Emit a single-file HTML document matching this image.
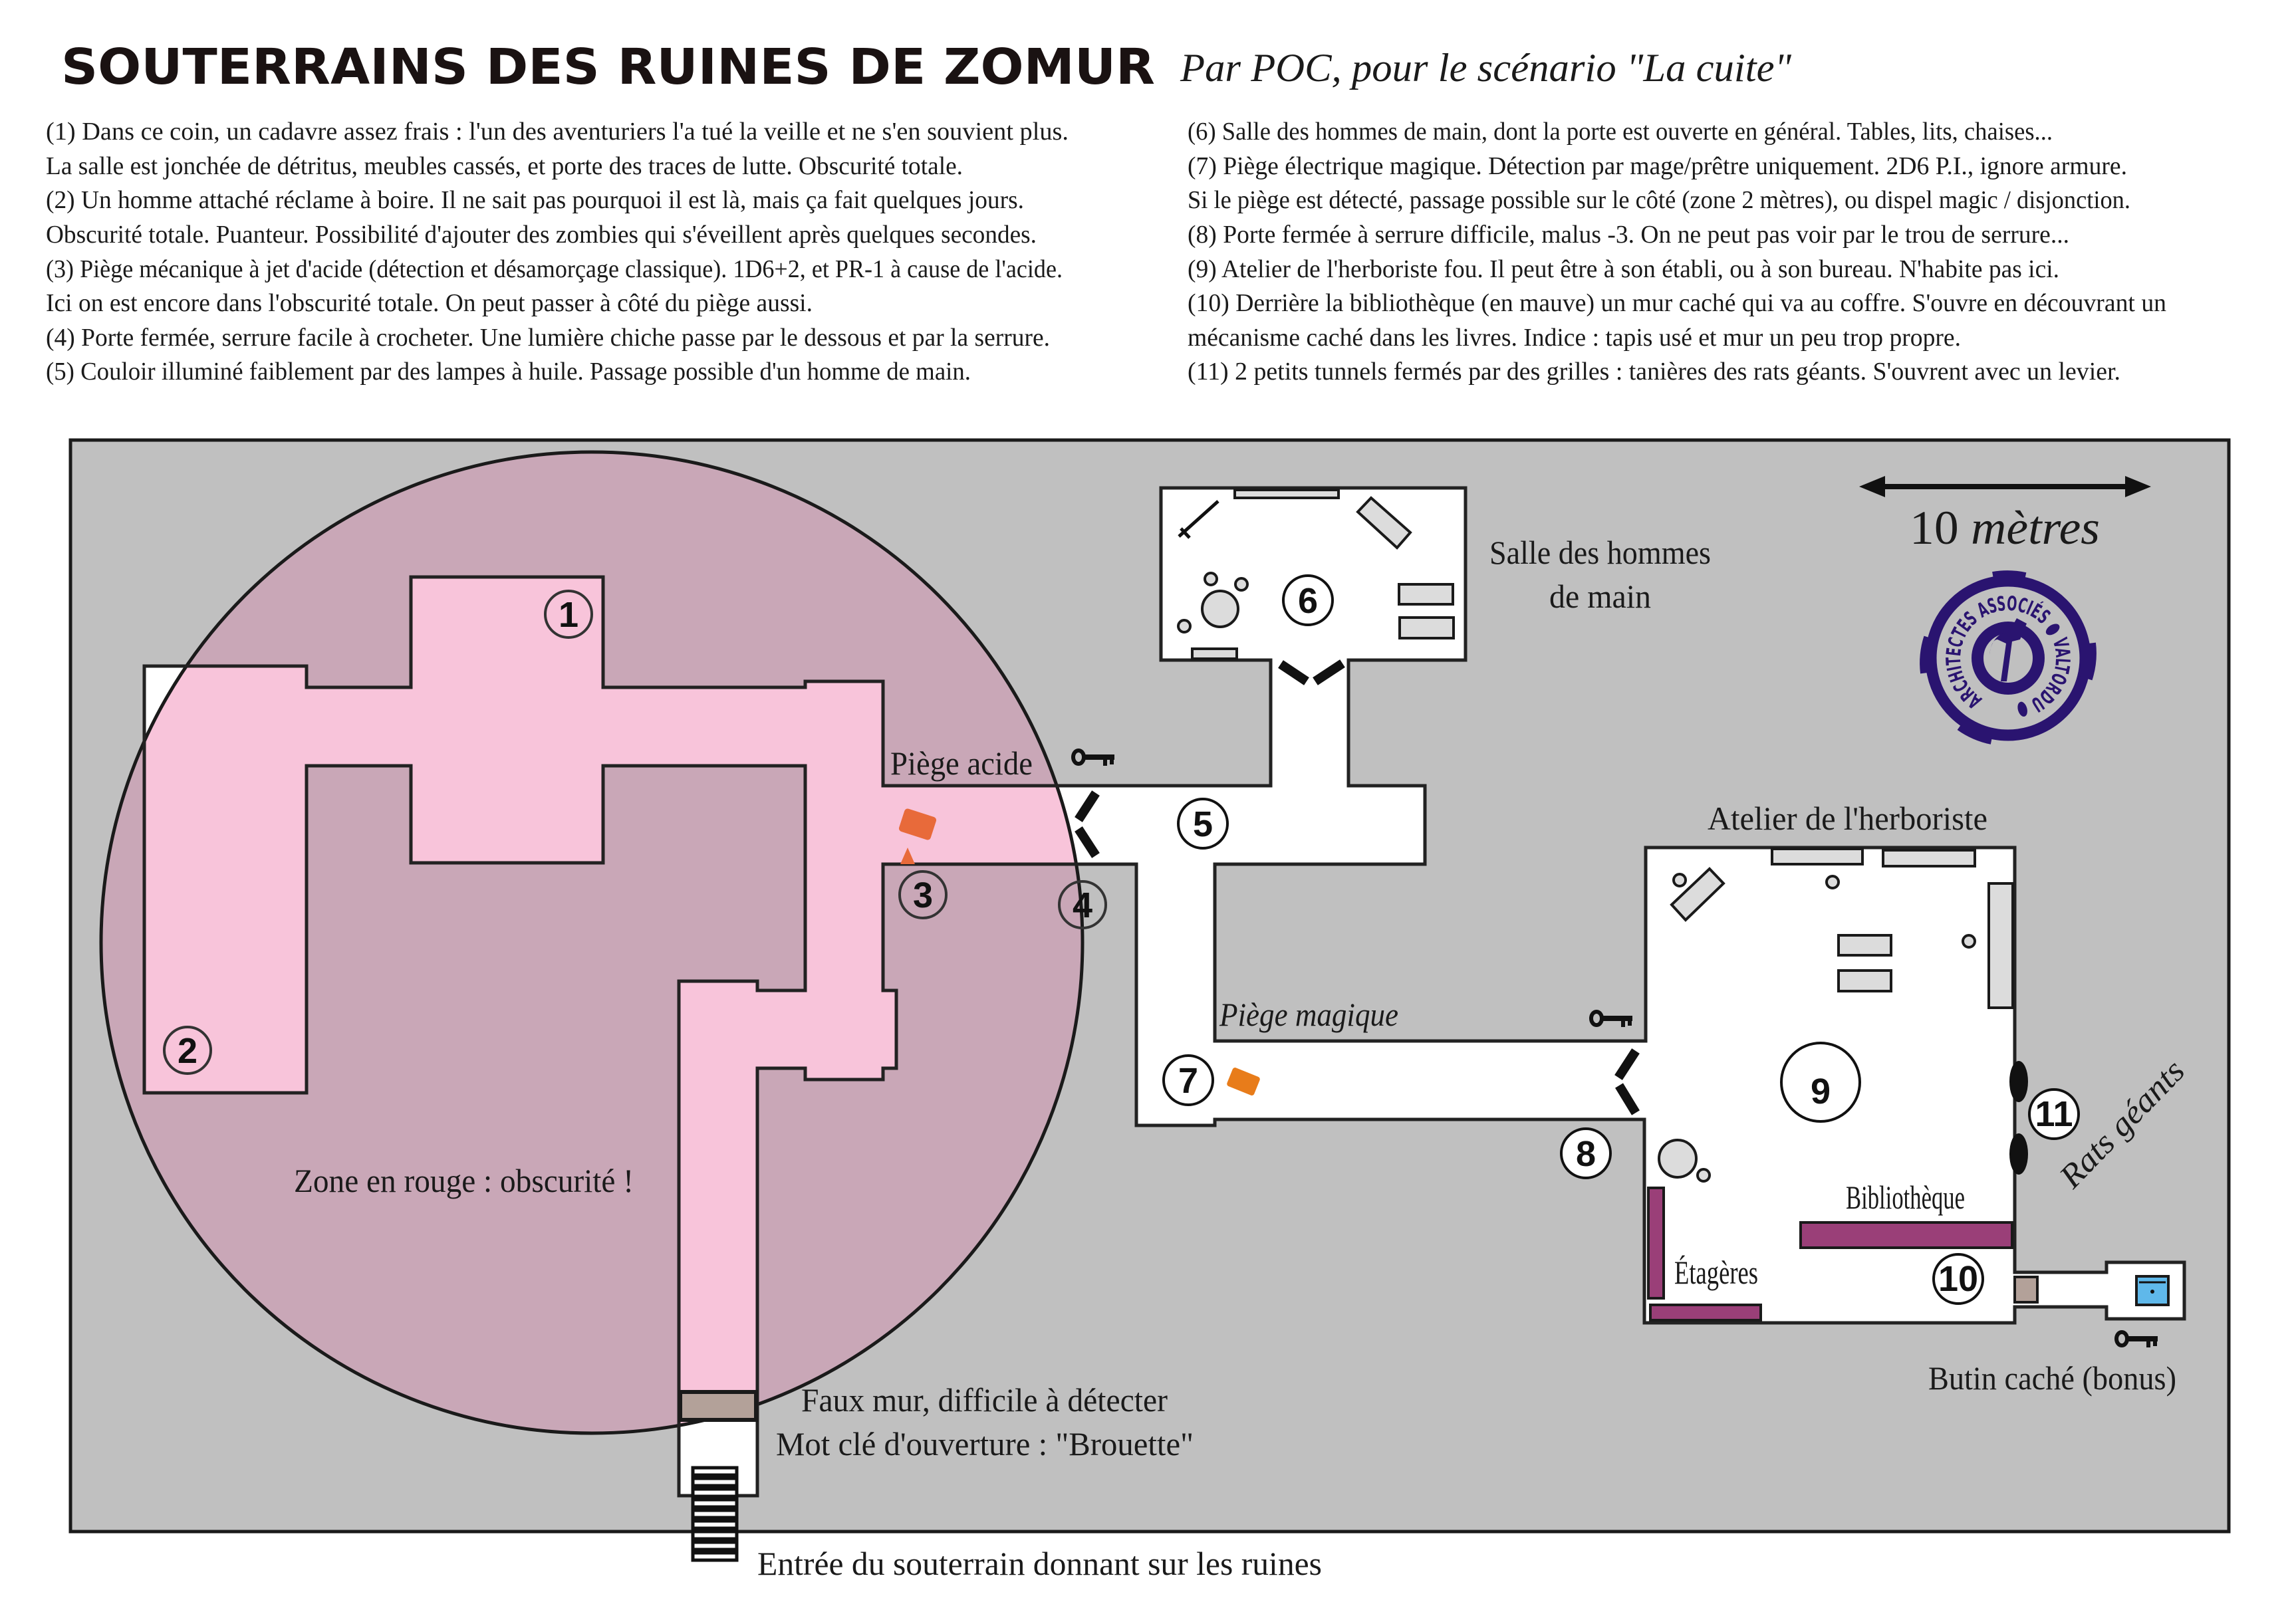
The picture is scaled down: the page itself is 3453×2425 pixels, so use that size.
<!DOCTYPE html>
<html><head><meta charset="utf-8"><style>
html,body{margin:0;padding:0;background:#fff}
svg{display:block}
.t{font-family:"Liberation Serif",serif;font-size:38px;fill:#1a1a1a}
.l{font-family:"Liberation Serif",serif;font-size:50px;fill:#1a1a1a}
.n{font-family:"Liberation Sans",sans-serif;font-weight:bold;font-size:54px;fill:#111;text-anchor:middle}
</style></head><body>
<svg width="3453" height="2425" viewBox="0 0 3453 2425" xmlns="http://www.w3.org/2000/svg">
<defs>
<ellipse id="zone" cx="890" cy="1418" rx="738" ry="738"/>
<clipPath id="zc"><use href="#zone"/></clipPath>
<path id="dun" d="M217,1002 L461,1002 L461,1034 L618,1034 L618,868 L907,868 L907,1034 L1211,1034 L1211,1025 L1328,1025 L1328,1182 L1911,1182 L1911,993 L1746,993 L1746,734 L2204,734 L2204,993 L2028,993 L2028,1182 L2143,1182 L2143,1300 L1827,1300 L1827,1566 L2475,1566 L2475,1275 L3030,1275 L3030,1914 L3168,1914 L3168,1899 L3285,1899 L3285,1984 L3168,1984 L3168,1966 L3030,1966 L3030,1990 L2473,1990 L2473,1684 L1827,1684 L1827,1693 L1709,1693 L1709,1300 L1328,1300 L1328,1490 L1348,1490 L1348,1607 L1328,1607 L1328,1624 L1211,1624 L1211,1607 L1139,1607 L1139,2250 L1021,2250 L1021,1476 L1139,1476 L1139,1490 L1211,1490 L1211,1152 L907,1152 L907,1298 L618,1298 L618,1152 L461,1152 L461,1644 L217,1644 Z"/>
<g id="key"><ellipse cx="11" cy="14" rx="8" ry="10" fill="none" stroke="#111" stroke-width="6"/><rect x="19" y="10" width="46" height="8" fill="#111"/><rect x="48" y="17" width="6" height="10" fill="#111"/><rect x="58" y="17" width="6" height="8" fill="#111"/></g>
<path id="ringtxt" d="M3020,1062 A72,72 0 1,1 3020.1,1062"/>
</defs>

<text x="92" y="126" font-family="DejaVu Sans, sans-serif" font-weight="bold" font-size="74" fill="#1a1212" textLength="1645" lengthAdjust="spacingAndGlyphs">SOUTERRAINS DES RUINES DE ZOMUR</text>
<text x="1775" y="122" font-family="Liberation Serif, serif" font-style="italic" font-size="60" fill="#1a1a1a" textLength="919" lengthAdjust="spacingAndGlyphs">Par POC, pour le scénario "La cuite"</text>

<text class="t" x="69" y="210" textLength="1538" lengthAdjust="spacingAndGlyphs">(1) Dans ce coin, un cadavre assez frais : l'un des aventuriers l'a tué la veille et ne s'en souvient plus.</text>
<text class="t" x="69" y="262" textLength="1379" lengthAdjust="spacingAndGlyphs">La salle est jonchée de détritus, meubles cassés, et porte des traces de lutte. Obscurité totale.</text>
<text class="t" x="69" y="313" textLength="1471" lengthAdjust="spacingAndGlyphs">(2) Un homme attaché réclame à boire. Il ne sait pas pourquoi il est là, mais ça fait quelques jours.</text>
<text class="t" x="69" y="365" textLength="1490" lengthAdjust="spacingAndGlyphs">Obscurité totale. Puanteur. Possibilité d'ajouter des zombies qui s'éveillent après quelques secondes.</text>
<text class="t" x="69" y="417" textLength="1529" lengthAdjust="spacingAndGlyphs">(3) Piège mécanique à jet d'acide (détection et désamorçage classique). 1D6+2, et PR-1 à cause de l'acide.</text>
<text class="t" x="69" y="468" textLength="1153" lengthAdjust="spacingAndGlyphs">Ici on est encore dans l'obscurité totale. On peut passer à côté du piège aussi.</text>
<text class="t" x="69" y="520" textLength="1510" lengthAdjust="spacingAndGlyphs">(4) Porte fermée, serrure facile à crocheter. Une lumière chiche passe par le dessous et par la serrure.</text>
<text class="t" x="69" y="571" textLength="1391" lengthAdjust="spacingAndGlyphs">(5) Couloir illuminé faiblement par des lampes à huile. Passage possible d'un homme de main.</text>
<text class="t" x="1786" y="210" textLength="1301" lengthAdjust="spacingAndGlyphs">(6) Salle des hommes de main, dont la porte est ouverte en général. Tables, lits, chaises...</text>
<text class="t" x="1786" y="262" textLength="1413" lengthAdjust="spacingAndGlyphs">(7) Piège électrique magique. Détection par mage/prêtre uniquement. 2D6 P.I.,  ignore armure.</text>
<text class="t" x="1786" y="313" textLength="1418" lengthAdjust="spacingAndGlyphs">Si le piège est détecté, passage possible sur le côté (zone 2 mètres), ou dispel magic / disjonction.</text>
<text class="t" x="1786" y="365" textLength="1326" lengthAdjust="spacingAndGlyphs">(8) Porte fermée à serrure difficile, malus -3. On ne peut pas voir par le trou de serrure...</text>
<text class="t" x="1786" y="417" textLength="1311" lengthAdjust="spacingAndGlyphs">(9) Atelier de l'herboriste fou. Il peut être à son établi, ou à son bureau. N'habite pas ici.</text>
<text class="t" x="1786" y="468" textLength="1472" lengthAdjust="spacingAndGlyphs">(10) Derrière la bibliothèque (en mauve) un mur caché qui va au coffre. S'ouvre en découvrant un</text>
<text class="t" x="1786" y="520" textLength="1163" lengthAdjust="spacingAndGlyphs">mécanisme caché dans les livres. Indice : tapis usé et mur un peu trop propre.</text>
<text class="t" x="1786" y="571" textLength="1403" lengthAdjust="spacingAndGlyphs">(11) 2 petits tunnels fermés par des grilles : tanières des rats géants. S'ouvrent avec un levier.</text>

<rect x="106" y="662" width="3246" height="1642" fill="#c0c0c0" stroke="#1a1a1a" stroke-width="5"/>

<use href="#zone" fill="#c9a7b7"/>
<use href="#dun" fill="#fff"/>
<use href="#dun" fill="#f8c4da" clip-path="url(#zc)"/>
<use href="#zone" fill="none" stroke="#1a1a1a" stroke-width="5"/>
<use href="#dun" fill="none" stroke="#222" stroke-width="5"/>
<rect x="1914" y="988" width="111" height="10" fill="#fff"/>
<rect x="2470" y="1569" width="10" height="112" fill="#fff"/>

<rect x="1023" y="2094" width="114" height="42" fill="#b3a199" stroke="#1a1a1a" stroke-width="6"/>
<g fill="#fff" stroke="#111" stroke-width="5">
<rect x="1042" y="2208" width="66" height="11"/><rect x="1042" y="2224" width="66" height="11"/><rect x="1042" y="2240" width="66" height="11"/><rect x="1042" y="2256" width="66" height="11"/><rect x="1042" y="2272" width="66" height="11"/><rect x="1042" y="2288" width="66" height="11"/><rect x="1042" y="2304" width="66" height="11"/><rect x="1042" y="2320" width="66" height="11"/><rect x="1042" y="2336" width="66" height="11"/>
</g>

<g fill="#dcdcdc" stroke="#1a1a1a" stroke-width="4">
<rect x="1857" y="737" width="156" height="12"/>
<polygon points="2062,749 2121,801 2101,824 2042,770"/>
<circle cx="1835" cy="916" r="27"/><circle cx="1821" cy="871" r="9"/><circle cx="1867" cy="879" r="9"/><circle cx="1781" cy="942" r="9"/>
<rect x="2104" y="879" width="81" height="30"/><rect x="2105" y="929" width="81" height="31"/>
<rect x="1793" y="976" width="67" height="15"/>
</g>
<path d="M1773,807 L1832,754 M1776,795 L1789,809" stroke="#111" stroke-width="5" fill="none"/>
<g stroke="#111" stroke-width="14">
<line x1="1926" y1="999" x2="1965" y2="1025"/><line x1="1978" y1="1025" x2="2019" y2="998"/>
<line x1="1648" y1="1193" x2="1622" y2="1233"/><line x1="1622" y1="1247" x2="1648" y2="1287"/>
<line x1="2460" y1="1581" x2="2434" y2="1621"/><line x1="2435" y1="1633" x2="2460" y2="1674"/>
</g>

<g fill="#dcdcdc" stroke="#1a1a1a" stroke-width="4">
<rect x="2665" y="1277" width="136" height="23"/><rect x="2832" y="1279" width="138" height="24"/>
<polygon points="2571,1307 2592,1329 2535,1384 2514,1361"/>
<circle cx="2526" cy="1324" r="9"/><circle cx="2756" cy="1327" r="9"/><circle cx="2961" cy="1416" r="9"/>
<rect x="2765" y="1407" width="79" height="30"/><rect x="2765" y="1460" width="79" height="31"/>
<rect x="2991" y="1329" width="36" height="187"/>
<circle cx="2523" cy="1743" r="28"/><circle cx="2562" cy="1768" r="9"/>
</g>
<g fill="#9a3f78" stroke="#1a1a1a" stroke-width="4">
<rect x="2479" y="1787" width="23" height="166"/>
<rect x="2482" y="1963" width="166" height="23"/>
<rect x="2708" y="1839" width="318" height="38"/>
</g>
<ellipse cx="3036" cy="1627" rx="14" ry="31" fill="#111"/>
<ellipse cx="3036" cy="1736" rx="14" ry="31" fill="#111"/>
<rect x="3030" y="1921" width="34" height="38" fill="#b3a199" stroke="#1a1a1a" stroke-width="4"/>
<rect x="3213" y="1920" width="48" height="43" fill="#5fb8ea" stroke="#1a1a1a" stroke-width="4"/>
<line x1="3217" y1="1929" x2="3257" y2="1929" stroke="#111" stroke-width="3"/>
<circle cx="3237" cy="1943" r="3" fill="#111"/>

<rect x="1355" y="1222" width="50" height="36" rx="5" fill="#e86a3a" transform="rotate(18 1380 1240)"/>
<polygon points="1365,1275 1354,1300 1376,1300" fill="#e86a3a"/>
<rect x="1848" y="1612" width="44" height="30" rx="4" fill="#e87c1a" transform="rotate(22 1870 1627)"/>

<use href="#key" x="1611" y="1125"/>
<use href="#key" x="2390" y="1518"/>
<use href="#key" x="3180" y="2000"/>

<g fill="none" stroke="#333" stroke-width="4">
<circle cx="855" cy="924" r="35"/><circle cx="282" cy="1580" r="35"/><circle cx="1388" cy="1346" r="35"/><circle cx="1628" cy="1361" r="35"/>
</g>
<g fill="#fff" stroke="#111" stroke-width="4">
<circle cx="1809" cy="1239" r="37"/><circle cx="1967" cy="903" r="37"/><circle cx="1787" cy="1625" r="37"/><circle cx="2385" cy="1735" r="37"/><circle cx="3089" cy="1676" r="37"/><circle cx="2945" cy="1924" r="37"/><circle cx="2738" cy="1628" r="59"/>
</g>
<g class="n">
<text class="n" x="855" y="943" fill="#333">1</text><text class="n" x="282" y="1599" fill="#333">2</text><text class="n" x="1388" y="1365" fill="#333">3</text><text class="n" x="1628" y="1380" fill="#333">4</text>
<text class="n" x="1809" y="1258">5</text><text class="n" x="1967" y="922">6</text><text class="n" x="1787" y="1644">7</text><text class="n" x="2385" y="1754">8</text>
<text class="n" x="3089" y="1694" font-size="46">11</text><text class="n" x="2945" y="1942" font-size="46">10</text>
<text class="n" x="2738" y="1660" font-size="92">9</text>
</g>

<text class="l" x="1339" y="1165" textLength="214" lengthAdjust="spacingAndGlyphs">Piège acide</text>
<text class="l" x="2240" y="848" textLength="333" lengthAdjust="spacingAndGlyphs">Salle des hommes</text>
<text class="l" x="2330" y="914" textLength="153" lengthAdjust="spacingAndGlyphs">de main</text>
<text class="l" x="2568" y="1248" textLength="421" lengthAdjust="spacingAndGlyphs">Atelier de l'herboriste</text>
<text class="l" x="1834" y="1543" font-style="italic" textLength="269" lengthAdjust="spacingAndGlyphs">Piège magique</text>
<text class="l" x="2776" y="1818" font-size="40" textLength="179" lengthAdjust="spacingAndGlyphs">Bibliothèque</text>
<text class="l" x="2518" y="1931" font-size="40" textLength="126" lengthAdjust="spacingAndGlyphs">Étagères</text>
<text class="l" x="2900" y="2090" textLength="373" lengthAdjust="spacingAndGlyphs">Butin caché (bonus)</text>
<text class="l" x="442" y="1793" textLength="511" lengthAdjust="spacingAndGlyphs">Zone en rouge : obscurité !</text>
<text class="l" x="1205" y="2123" textLength="551" lengthAdjust="spacingAndGlyphs">Faux mur, difficile à détecter</text>
<text class="l" x="1167" y="2189" textLength="628" lengthAdjust="spacingAndGlyphs">Mot clé d'ouverture : "Brouette"</text>
<text class="l" x="1139" y="2369" textLength="849" lengthAdjust="spacingAndGlyphs">Entrée du souterrain donnant sur les ruines</text>
<text class="l" x="3118" y="1790" font-style="italic" font-size="48" transform="rotate(-46 3118 1790)" textLength="245" lengthAdjust="spacingAndGlyphs">Rats géants</text>

<line x1="2815" y1="732" x2="3215" y2="732" stroke="#111" stroke-width="8"/>
<polygon points="2796,732 2835,716 2835,748" fill="#111"/>
<polygon points="3235,732 3196,716 3196,748" fill="#111"/>
<text x="2872" y="818" font-family="Liberation Serif, serif" font-size="72" fill="#1a1a1a" textLength="286" lengthAdjust="spacingAndGlyphs">10 <tspan font-style="italic">mètres</tspan></text>

<g stroke="#2a1470" fill="none">
<circle cx="3020" cy="990" r="116" stroke-width="17"/>
<circle cx="3020" cy="990" r="46" stroke-width="18"/>
<g stroke-width="22">
<path d="M2998,871 A121,121 0 0,1 3045,872"/>
<path d="M2899,1012 A121,121 0 0,1 2904,960"/>
<path d="M3141,968 A121,121 0 0,1 3136,1020"/>
<path d="M2996,1109 A121,121 0 0,1 2950,1089"/>
</g>
</g>
<path d="M3009,1025 L3017,968 L3004,962 Q2995,962 2992,985 Q2995,955 3023,948 L3033,930 L3048,938 L3038,962 L3026,965 L3018,1025 Z" fill="#2a1470"/>
<text font-family="DejaVu Sans, sans-serif" font-weight="bold" font-size="30" fill="#2a1470"><textPath href="#ringtxt" startOffset="40" textLength="400" lengthAdjust="spacingAndGlyphs">ARCHITECTES ASSOCIÉS ● VALTORDU ●</textPath></text>
</svg>
</body></html>
